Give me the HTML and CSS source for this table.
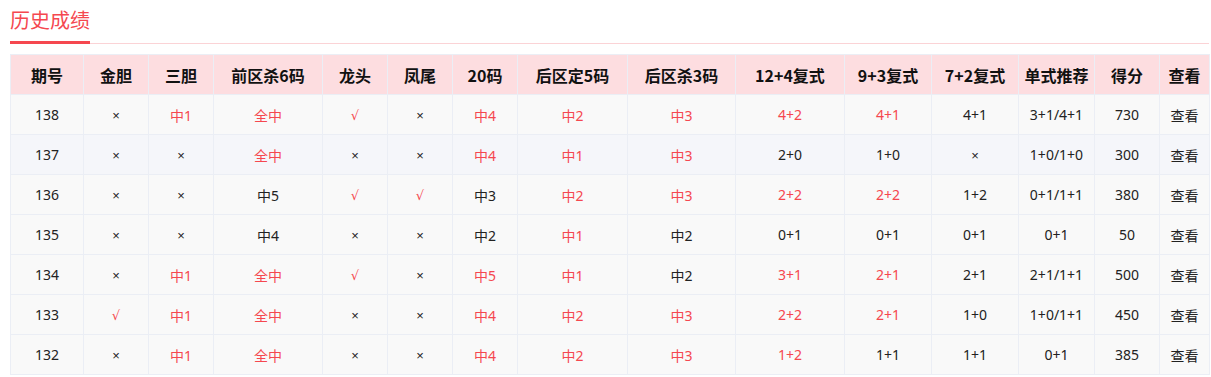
FILE: index.html
```html
<!DOCTYPE html>
<html lang="zh-CN">
<head>
<meta charset="utf-8">
<title>历史成绩</title>
<link rel="stylesheet" href="styles.css">
</head>
<body>
<div class="page">
  <div class="tabbar"><span class="tab">历史成绩</span></div>
  <table class="grid">
    <colgroup>
      <col style="width:73px"><col style="width:65px"><col style="width:65px"><col style="width:109px"><col style="width:65px"><col style="width:65px"><col style="width:65px"><col style="width:110px"><col style="width:108px"><col style="width:109px"><col style="width:87px"><col style="width:87px"><col style="width:76px"><col style="width:65px"><col style="width:50px">
    </colgroup>
    <thead>
      <tr><th>期号</th><th>金胆</th><th>三胆</th><th>前区杀6码</th><th>龙头</th><th>凤尾</th><th>20码</th><th>后区定5码</th><th>后区杀3码</th><th>12+4复式</th><th>9+3复式</th><th>7+2复式</th><th>单式推荐</th><th>得分</th><th>查看</th></tr>
    </thead>
    <tbody>
      <tr><td>138</td><td><span class="x">×</span></td><td class="r">中1</td><td class="r">全中</td><td class="r"><span class="v">√</span></td><td><span class="x">×</span></td><td class="r">中4</td><td class="r">中2</td><td class="r">中3</td><td class="r">4+2</td><td class="r">4+1</td><td>4+1</td><td>3+1/4+1</td><td>730</td><td>查看</td></tr>
      <tr class="hl"><td>137</td><td><span class="x">×</span></td><td><span class="x">×</span></td><td class="r">全中</td><td><span class="x">×</span></td><td><span class="x">×</span></td><td class="r">中4</td><td class="r">中1</td><td class="r">中3</td><td>2+0</td><td>1+0</td><td><span class="x">×</span></td><td>1+0/1+0</td><td>300</td><td>查看</td></tr>
      <tr><td>136</td><td><span class="x">×</span></td><td><span class="x">×</span></td><td>中5</td><td class="r"><span class="v">√</span></td><td class="r"><span class="v">√</span></td><td>中3</td><td class="r">中2</td><td class="r">中3</td><td class="r">2+2</td><td class="r">2+2</td><td>1+2</td><td>0+1/1+1</td><td>380</td><td>查看</td></tr>
      <tr><td>135</td><td><span class="x">×</span></td><td><span class="x">×</span></td><td>中4</td><td><span class="x">×</span></td><td><span class="x">×</span></td><td>中2</td><td class="r">中1</td><td>中2</td><td>0+1</td><td>0+1</td><td>0+1</td><td>0+1</td><td>50</td><td>查看</td></tr>
      <tr><td>134</td><td><span class="x">×</span></td><td class="r">中1</td><td class="r">全中</td><td class="r"><span class="v">√</span></td><td><span class="x">×</span></td><td class="r">中5</td><td class="r">中1</td><td>中2</td><td class="r">3+1</td><td class="r">2+1</td><td>2+1</td><td>2+1/1+1</td><td>500</td><td>查看</td></tr>
      <tr><td>133</td><td class="r"><span class="v">√</span></td><td class="r">中1</td><td class="r">全中</td><td><span class="x">×</span></td><td><span class="x">×</span></td><td class="r">中4</td><td class="r">中2</td><td class="r">中3</td><td class="r">2+2</td><td class="r">2+1</td><td>1+0</td><td>1+0/1+1</td><td>450</td><td>查看</td></tr>
      <tr><td>132</td><td><span class="x">×</span></td><td class="r">中1</td><td class="r">全中</td><td><span class="x">×</span></td><td><span class="x">×</span></td><td class="r">中4</td><td class="r">中2</td><td class="r">中3</td><td class="r">1+2</td><td>1+1</td><td>1+1</td><td>0+1</td><td>385</td><td>查看</td></tr>
    </tbody>
  </table>
</div>
</body>
</html>
```
FILE: styles.css
```css
* { box-sizing: border-box; }
html, body { margin: 0; padding: 0; background: #fff; }
body {
  font-family: "Microsoft YaHei", "Noto Sans CJK SC", "Noto Sans", sans-serif;
  color: #333;
}
.page { padding: 0 2px 0 10px; }
.tabbar {
  display: flex;
  align-items: flex-end;
  height: 44px;
  border-bottom: 1px solid #fbd3d6;
  margin-bottom: 10px;
}
.tab {
  display: block;
  font-size: 20px;
  line-height: 28px;
  color: #f5474f;
  padding-top: 6px;
  width: 80px;
  height: 44px;
  border-bottom: 3px solid #f5474f;
  margin-bottom: -1px;
  white-space: nowrap;
}
.grid {
  width: 1199px;
  border-collapse: collapse;
  table-layout: fixed;
  border: 1px solid #ebeef5;
}
.grid th, .grid td {
  border: 1px solid #ebeef5;
  text-align: center;
  padding: 0;
  height: 40px;
  white-space: nowrap;
}
.grid th {
  background: #fddde0;
  font-size: 16px;
  font-weight: bold;
  color: #111;
}
.grid td {
  background: #f9f9f9;
  font-family: "Noto Sans", "Noto Sans CJK SC", sans-serif;
  font-size: 14px;
  color: #222;
}
.grid tr.hl td { background: #f5f6fa; }
.grid td.r { color: #f5474f; }
.x {
  font-family: "Liberation Sans", "DejaVu Sans", sans-serif;
  font-size: 13px;
}
.v {
  font-family: "DejaVu Sans", "Liberation Sans", sans-serif;
  font-size: 13px;
}
```
